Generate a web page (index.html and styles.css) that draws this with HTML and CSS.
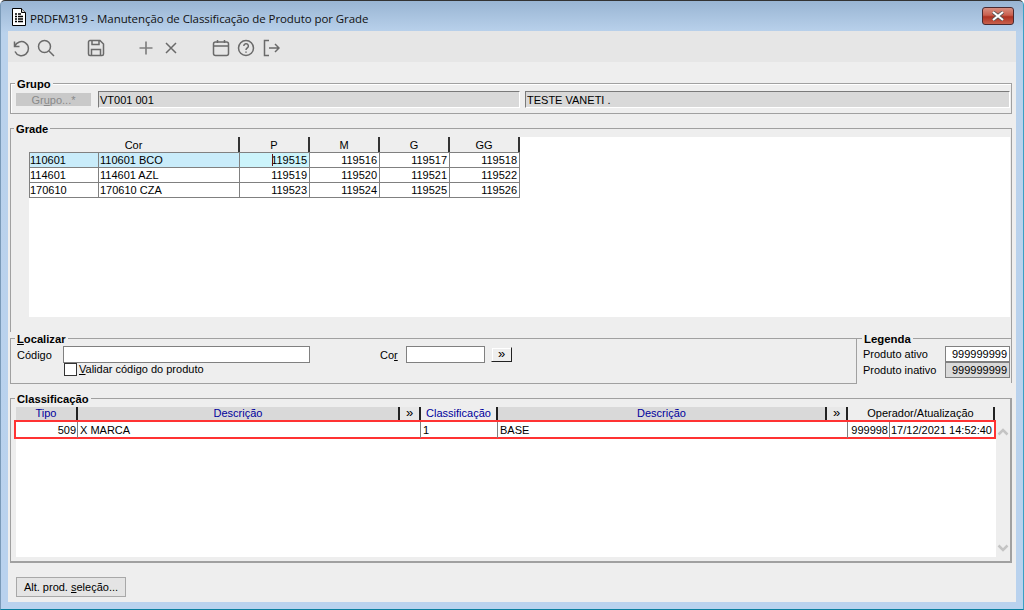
FILE: index.html
```html
<!DOCTYPE html>
<html lang="pt">
<head>
<meta charset="utf-8">
<title>PRDFM319</title>
<link rel="stylesheet" href="styles.css">
</head>
<body>
<div class="window">
  <header class="titlebar">
    <svg class="doc-icon" width="14" height="18" viewBox="0 0 14 18"><path d="M.5.5h9l4 4v13H.5z" fill="#fff" stroke="#000"/><path d="M9.500.5v4h4" fill="#ccc" stroke="#000"/><path d="M3 6h2M6 6h3M3 8.500h2M6 8.500h5M3 11h2M6 11h5M3 13.500h2M6 13.500h5" stroke="#000" stroke-width="1.300"/></svg>
    <span class="title-text">PRDFM319 - Manutenção de Classificação de Produto por Grade</span>
    <div class="close-btn"><svg width="14" height="10" viewBox="0 0 14 10"><path d="M2 1l10 8M12 1L2 9" stroke="#555" stroke-width="3.600"/><path d="M2 1l10 8M12 1L2 9" stroke="#fff" stroke-width="2.200"/></svg></div>
  </header>
  <nav class="toolbar">
    <span class="tool"><svg width="18" height="18" viewBox="0 0 18 18"><path d="M2.500 2.500v5h5M2.800 7.300A7 7 0 1 1 3 12.500" class="ico"/></svg></span>
    <span class="tool"><svg width="18" height="18" viewBox="0 0 18 18"><circle cx="7.500" cy="7.500" r="6" class="ico"/><path d="M12 12l5 5" class="ico"/></svg></span>
    <span class="tool tool-gap"><svg width="18" height="18" viewBox="0 0 18 18"><path d="M3 1.500h10l3.500 3.500v10a1.500 1.500 0 0 1-1.500 1.500H3A1.500 1.500 0 0 1 1.500 15V3A1.500 1.500 0 0 1 3 1.500zM5 1.500v4h7v-4M4.500 16.500v-6h9v6" class="ico"/></svg></span>
    <span class="tool tool-gap"><svg width="16" height="16" viewBox="0 0 16 16"><path d="M8 1.500v13M1.500 8h13" class="ico plus"/></svg></span>
    <span class="tool"><svg width="14" height="14" viewBox="0 0 14 14"><path d="M2 2l10 10M12 2L2 12" class="ico"/></svg></span>
    <span class="tool tool-gap"><svg width="18" height="18" viewBox="0 0 18 18"><rect x="1.500" y="3" width="15" height="13.500" rx="2" class="ico"/><path d="M1.500 7h15M5.500 1v3M12.500 1v3" class="ico"/></svg></span>
    <span class="tool"><svg width="18" height="18" viewBox="0 0 18 18"><circle cx="9" cy="9" r="7.500" class="ico"/><path d="M6.800 7a2.300 2.300 0 1 1 3.400 2c-.8.500-1.200 1-1.200 2M9 12.500v1.300" class="ico"/></svg></span>
    <span class="tool"><svg width="18" height="18" viewBox="0 0 18 18"><path d="M7 1.500H2.500v15H7M7 9h10M13 5l4 4-4 4" class="ico"/></svg></span>
  </nav>
  <main class="content">
    <section class="group group-grupo">
      <h2 class="legend">Grupo</h2>
      <span class="btn-disabled">Gr<u>u</u>po...*</span>
      <span class="field field-grow-a">VT001 001</span>
      <span class="field field-grow-b">TESTE VANETI .</span>
    </section>

    <section class="group group-grade">
      <h2 class="legend">Grade</h2>
      <div class="grade-area">
        <table class="grade">
          <colgroup><col class="c70"><col class="c141"><col class="c70"><col class="c70"><col class="c70"><col class="c70"></colgroup>
          <thead><tr><th colspan="2">Cor</th><th>P</th><th>M</th><th>G</th><th>GG</th></tr></thead>
          <tbody>
            <tr class="selected"><td>110601</td><td>110601 BCO</td><td class="num current"><span class="caret"></span>119515</td><td class="num">119516</td><td class="num">119517</td><td class="num">119518</td></tr>
            <tr><td>114601</td><td>114601 AZL</td><td class="num">119519</td><td class="num">119520</td><td class="num">119521</td><td class="num">119522</td></tr>
            <tr><td>170610</td><td>170610 CZA</td><td class="num">119523</td><td class="num">119524</td><td class="num">119525</td><td class="num">119526</td></tr>
          </tbody>
        </table>
      </div>
    </section>

    <div class="split">
      <section class="group group-localizar">
        <h2 class="legend"><u>L</u>ocalizar</h2>
        <div class="loc-row">
          <label class="lbl-codigo">Código</label>
          <span class="field-white input-codigo"></span>
          <label class="lbl-cor">Co<u>r</u></label>
          <span class="field-white input-cor"></span>
          <span class="btn-more">»</span>
        </div>
        <div class="check-row"><span class="checkbox"></span><span class="check-label"><u>V</u>alidar código do produto</span></div>
      </section>
      <section class="group group-legenda">
        <h2 class="legend">Legenda</h2>
        <div class="leg-row"><span>Produto ativo</span><span class="leg-box">999999999</span></div>
        <div class="leg-row"><span>Produto inativo</span><span class="leg-box inactive">999999999</span></div>
      </section>
    </div>

    <section class="group group-class">
      <h2 class="legend">Classificação</h2>
      <div class="class-wrap">
        <div class="class-main">
          <div class="class-cols class-head">
            <span class="h-blue h-dim">Tipo</span>
            <span class="h-blue h-dim">Descrição</span>
            <span class="h-more">»</span>
            <span class="h-blue">Classificação</span>
            <span class="h-blue h-dim">Descrição</span>
            <span class="h-more">»</span>
            <span class="h-oper">Operador/Atualização</span>
          </div>
          <div class="class-cols class-row">
            <span class="num">509</span>
            <span class="wide">X MARCA</span>
            <span>1</span>
            <span class="wide">BASE</span>
            <span class="num">999998</span>
            <span class="date">17/12/2021 14:52:40</span>
          </div>
        </div>
        <div class="scroll">
          <svg width="12" height="9" viewBox="0 0 12 9"><path d="M1.500 7.500L6 3l4.500 4.500" class="chev"/></svg>
          <svg width="12" height="9" viewBox="0 0 12 9"><path d="M1.500 1.500L6 6l4.500-4.500" class="chev"/></svg>
        </div>
      </div>
    </section>

    <div class="footer-bar"><span class="btn-footer">Alt. prod. <u>s</u>eleção...</span></div>
  </main>
</div>
</body>
</html>
```
FILE: styles.css
```css
* { box-sizing: border-box; }
html, body { margin: 0; padding: 0; }
body {
  width: 1024px; height: 610px; overflow: hidden;
  font-family: "Liberation Sans", Arial, sans-serif;
  font-size: 11px; color: #000;
}
u { text-decoration: underline; }

.window {
  width: 1024px; height: 610px;
  display: flex; flex-direction: column;
  padding: 0 7px 7px;
  background: linear-gradient(#99b5d3 0, #bad2ec 32px, #b9d2ee 100%);
  border-top: 1px solid #333;
  border-left: 1px solid #7a9ab8;
  border-right: 1px solid #3aa0c4;
  border-bottom: 1px solid #0a7f9f;
  border-radius: 5px 5px 0 0;
}

.titlebar {
  height: 30px; flex: none;
  display: flex; align-items: center;
  margin: 0 -7px; padding: 2px 9px 0 11px;
}
.doc-icon { flex: none; margin-top: -1px; }
.title-text {
  margin-left: 4px; flex: 1; padding-top: 2px;
  font-family: "Open Sans", sans-serif; font-size: 11.5px; letter-spacing: -0.085px; color: #111;
}
.close-btn {
  width: 32px; height: 18px; margin-top: -3px;
  display: flex; align-items: center; justify-content: center;
  border: 1px solid #4a2a30; border-radius: 3px;
  background: linear-gradient(#d98f80 0, #c9604f 45%, #ae3222 55%, #c8604c 100%);
}

.toolbar {
  height: 31px; flex: none;
  display: flex; align-items: center; padding-top: 2px;
  background: #e6e6e6;
}
.tool { width: 25px; display: flex; justify-content: center; align-items: center; }
.tool-gap { margin-left: 25px; }
.ico { fill: none; stroke: #6a6a6a; stroke-width: 1.500; }
.plus { stroke-width: 1.700; stroke: #808080; }

.content {
  flex: 1; min-height: 0;
  display: flex; flex-direction: column;
  padding: 0 4px 0 2px;
  background: #eeeeee;
}

.group {
  position: relative; flex: none;
  border: 1px solid #a0a0a0;
  box-shadow: inset 1px 1px 0 #fff;
}
.legend {
  position: absolute; left: 4px; top: -7px; margin: 0;
  padding: 0 2px; background: #eee;
  font-size: 11.200px; font-weight: bold; line-height: 14px;
}
.group-legenda .legend { left: 5px; font-size: 11.400px; }

.group-grupo {
  margin-top: 21px; height: 31px;
  display: flex; align-items: center; padding: 0 1px 0 5px;
}
.btn-disabled {
  width: 75px; height: 13px; margin-top: 1px;
  background: #c9c9c9; color: #8a8a8a; text-align: center; line-height: 15px;
}
.field {
  height: 17px; margin-top: 1px; padding-left: 1px; line-height: 17px;
  background: #d9d9d9;
  border: 1px solid #fff; border-top-color: #7a7a7a; border-left-color: #7a7a7a;
}
.field-grow-a { width: 422px; margin-left: 7px; }
.field-grow-b { width: 485px; margin-left: 5px; }

.group-grade {
  margin-top: 14px; height: 210px; padding: 8px 0 0 19px;
  border-bottom: 0; border-left: 0;
  box-shadow: none;
  background: linear-gradient(#a0a0a0, #a0a0a0) left top / 1px 203px no-repeat;
}
.grade-area { width: 981px; height: 180px; background: #fff; }
.grade { border-collapse: separate; border-spacing: 0; table-layout: fixed; width: 491px; }
.c70 { width: 70px; } .c141 { width: 141px; }
.grade th {
  height: 15px; padding: 0; font-weight: normal; text-align: center; line-height: 14px;
  background: #eee; border-right: 2px solid #333;
}
.grade td {
  height: 15px; padding: 1px 2px 0 1px; line-height: 13px;
  border-right: 1px solid #808080; border-bottom: 1px solid #808080; white-space: nowrap;
}
.grade td:first-child { border-left: 1px solid #808080; padding-left: 0; }
.selected td { height: 16px; border-top: 1px solid #808080; background: #c9ecfa; }
.selected .num { background: #fff; }
.selected .current { background: #ccf4fb; position: relative; }
.num { text-align: right; }
.caret {
  position: absolute; left: 32px; top: 1px; width: 1px; height: 12px; background: #611;
}

.split { display: flex; flex: none; height: 45px; }
.group-localizar {
  width: 847px; height: 46px; padding: 7px 0 0 6px;
  box-shadow: none;
}
.loc-row { display: flex; align-items: center; height: 17px; }
.lbl-codigo { width: 46px; }
.field-white {
  height: 17px; background: #fff; border: 1px solid #808080;
}
.input-codigo { width: 247px; }
.lbl-cor { margin-left: 70px; width: 26px; }
.input-cor { width: 79px; }
.btn-more {
  width: 21px; height: 15px; margin-left: 6px;
  background: #eee; text-align: center; line-height: 12px; font-size: 13px;
  border: 1px solid #eee; border-right-color: #222; border-bottom-color: #222;
  box-shadow: inset 1px 1px 0 #fff;
}
.check-row { display: flex; align-items: center; height: 13px; margin-left: 47px; }
.checkbox {
  width: 13px; height: 13px; margin-right: 2px;
  background: #fff; border: 1px solid #333;
}
.check-label { line-height: 11px; }
.group-legenda {
  flex: 1; margin-left: -1px; padding: 7px 0 0 6px;
  border-bottom: 0; box-shadow: none;
}
.leg-row { display: flex; align-items: center; justify-content: space-between; height: 16px; padding-right: 1px; }
.leg-box {
  width: 65px; height: 16px; padding-right: 2px; text-align: right; line-height: 14px;
  background: #fff; border: 1px solid #808080;
}
.leg-box.inactive { background: #d9d9d9; }

.group-class {
  margin-top: 15px; height: 165px; padding: 8px 1px 5px 3px;
  box-shadow: none; border-bottom-width: 2px; border-right-width: 2px;
}
.class-wrap { display: flex; height: 150px; }
.class-main { flex: none; width: 980px; margin-left: 2px; background: #fff; }
.class-cols {
  display: grid;
  grid-template-columns: 62px 322px 21px 77px 329px 21px 42px 105px;
}
.class-head { height: 13px; background: #eee; line-height: 12px; }
.class-head span { text-align: center; border-right: 2px solid #222; }
.h-blue { color: #00009c; }
.h-dim { background: #d9d9d9; }
.h-more { font-size: 13px; line-height: 11px; background: #e8e8e8; }
.h-oper { grid-column: span 2; }
.class-row {
  position: relative; z-index: 1;
  height: 19px; width: 982px; margin-left: -2px;
  border: 2px solid #f33; line-height: 15px;
}
.class-row span { padding: 1px 1px 0 2px; border-right: 1px solid #808080; white-space: nowrap; }
.class-row .wide { grid-column: span 2; }
.class-row .date { border-right: 0; padding-left: 1px; }
.scroll {
  flex: 1; display: flex; flex-direction: column; justify-content: space-between;
  align-items: center; padding: 20px 0 4px;
}
.chev { fill: none; stroke: #c4c4c4; stroke-width: 2.500; }

.footer-bar { margin-top: 14px; padding-left: 6px; }
.btn-footer {
  display: block; width: 110px; height: 20px; text-align: center; line-height: 18px;
  background: #e4e4e4; border: 1px solid #a8a8a8;
}
```
